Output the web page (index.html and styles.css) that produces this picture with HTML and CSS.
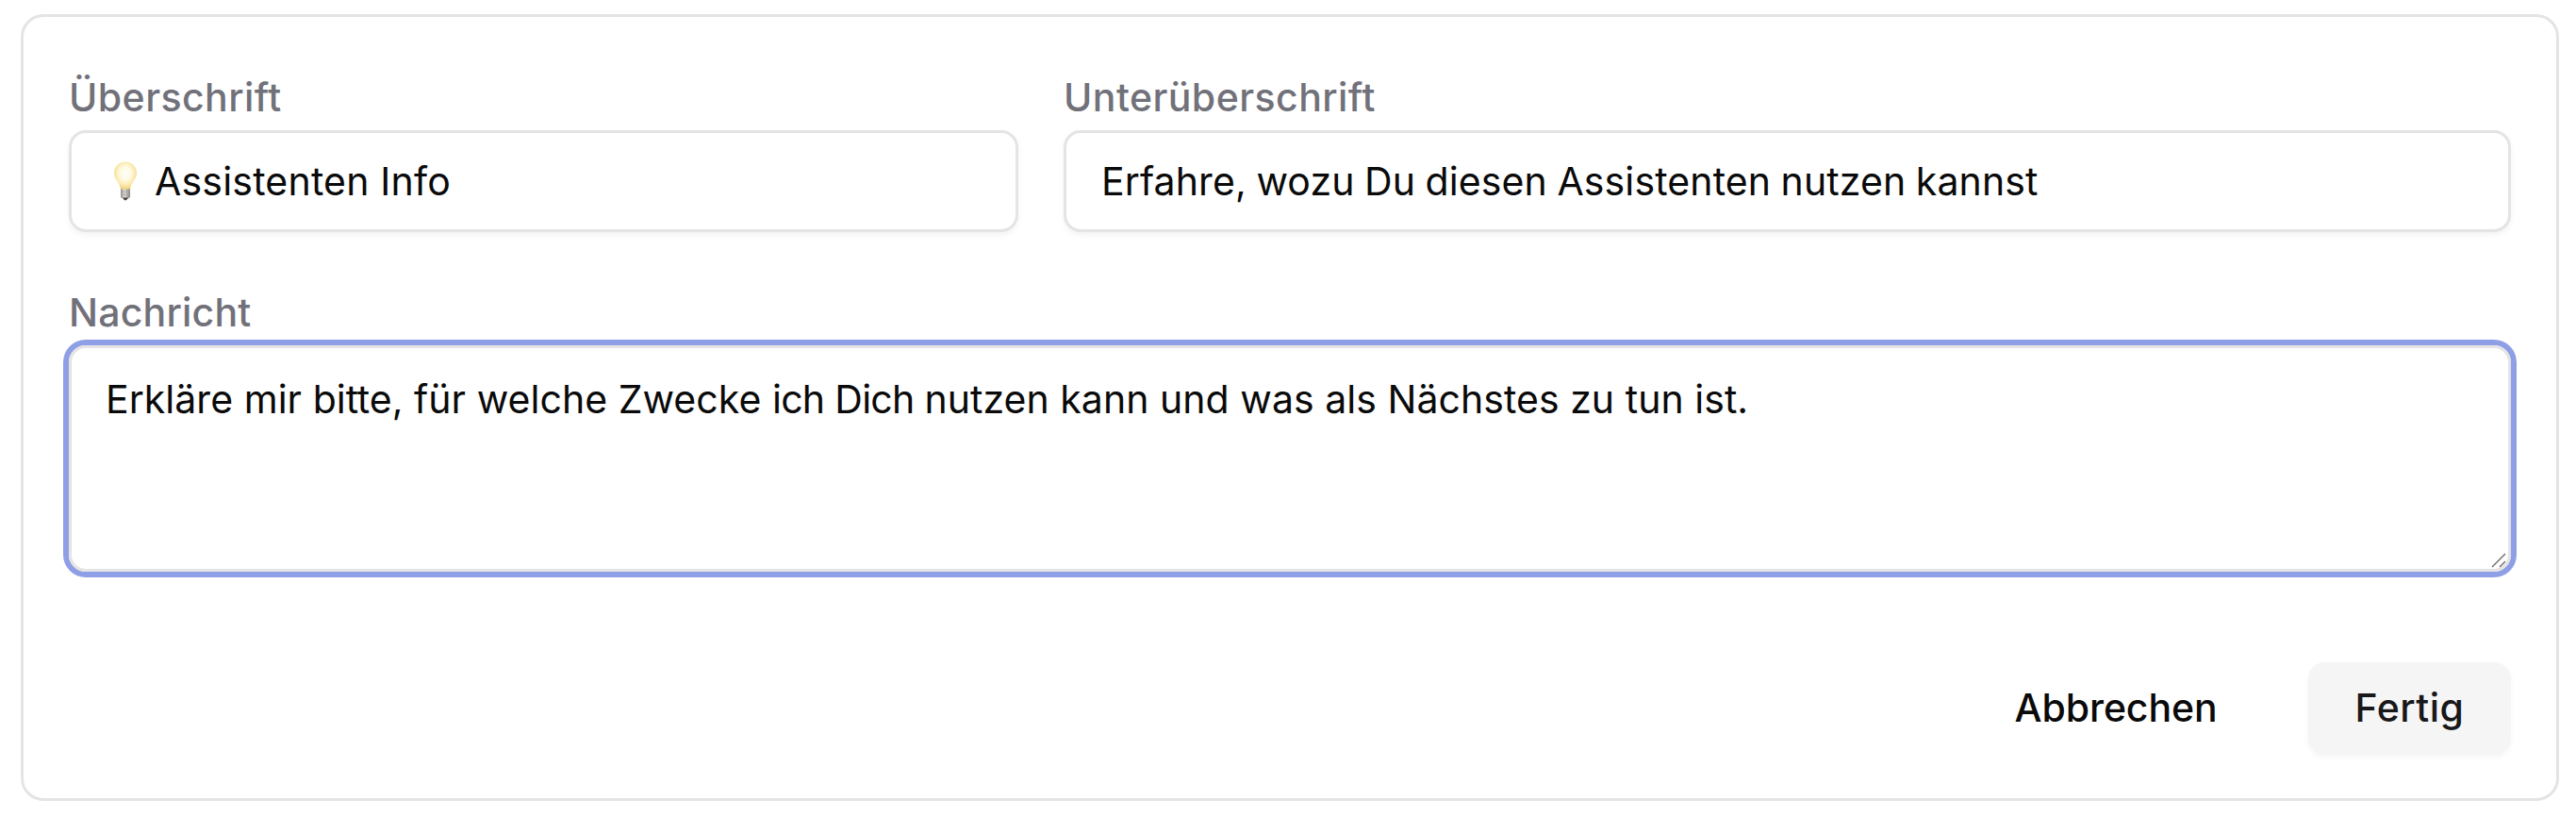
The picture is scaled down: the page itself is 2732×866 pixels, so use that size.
FILE: index.html
```html
<!DOCTYPE html>
<html lang="de">
<head>
<meta charset="utf-8">
<title>Assistenten Info</title>
<link rel="stylesheet" href="styles.css">
</head>
<body>
<form class="card">
  <div class="row">
    <div class="field field-title">
      <span class="label label-title">Überschrift</span>
      <div class="input" role="textbox">
        <svg class="bulb" viewBox="0 0 26 42" aria-hidden="true">
          <defs>
            <radialGradient id="glass" cx="50%" cy="42%" r="60%">
              <stop offset="0" stop-color="#fffefa"/>
              <stop offset="0.4" stop-color="#fffae3"/>
              <stop offset="0.75" stop-color="#f9e7a6"/>
              <stop offset="1" stop-color="#ecca6c"/>
            </radialGradient>
            <linearGradient id="metal">
              <stop offset="0" stop-color="#8d8b85"/>
              <stop offset="0.4" stop-color="#e0ded8"/>
              <stop offset="1" stop-color="#85827b"/>
            </linearGradient>
          </defs>
          <path d="M13 .5C6 .5 1 5.600 1 12.500c0 7.500 6.300 9.500 7 17.500h10c.7-8 7-10 7-17.500C25 5.600 20 .5 13 .5z" fill="url(#glass)"/>
          <path d="M8 29.500h10v8.500l-3 2H11l-3-2z" fill="url(#metal)"/>
          <path d="M8 32.500l10-.8M8 35.500l10-.8" stroke="#a7a49d" stroke-width=".8"/>
          <path d="M10 38.500h6l-2 2.700h-2z" fill="#44423e"/>
        </svg>
        <span class="value value-title">Assistenten Info</span>
      </div>
    </div>
    <div class="field field-subtitle">
      <span class="label label-subtitle">Unterüberschrift</span>
      <div class="input" role="textbox"><span class="value value-subtitle">Erfahre, wozu Du diesen Assistenten nutzen kannst</span></div>
    </div>
  </div>
  <div class="field field-message">
    <span class="label label-message">Nachricht</span>
    <div class="textarea" role="textbox" aria-multiline="true">
      <span class="value value-message">Erkläre mir bi<span class="joined">t</span>te, für welche Zwecke <span class="tight">ich Dich </span>nutzen kann und was als Nächstes zu tun ist.</span>
      <svg class="resizer" viewBox="0 0 16 16" aria-hidden="true"><path d="M1 15L15 1M9 15l6-6" stroke="#6b6b6b" stroke-width="1.400" fill="none"/></svg>
    </div>
  </div>
  <div class="actions">
    <button class="button button-ghost" type="button"><span class="text-cancel">Abbrechen</span></button>
    <button class="button button-primary" type="button"><span class="text-done">Fertig</span></button>
  </div>
</form>
</body>
</html>
```
FILE: styles.css
```css
* { box-sizing: border-box; }
body {
  margin: 0;
  padding: 15px 18px 17px 22px;
  height: 866px;
  background: #fff;
  color: #0a0a0a;
  font: 400 41px/60px Inter, "Liberation Sans", sans-serif;
  white-space: nowrap;
}
.card {
  height: 834px;
  padding: 55px 48px 46px;
  border: 3px solid #e4e4e5;
  border-radius: 24px;
  display: flex;
  flex-direction: column;
}
.row { display: grid; grid-template-columns: 1007px 1fr; gap: 48px; }
.field { display: flex; flex-direction: column; }
.label { height: 65px; line-height: 60px; color: #71717a; font-weight: 500; }
.label-title { letter-spacing: .45px; }
.label-subtitle { letter-spacing: .45px; }
.label-message { letter-spacing: .2px; }
.value-title { letter-spacing: .2px; }
.value-subtitle { letter-spacing: .12px; word-spacing: -1.200px; }
.input {
  height: 108px;
  padding: 0 37px;
  border: 3px solid #e4e4e5;
  border-radius: 18px;
  box-shadow: 0 3px 6px rgba(0, 0, 0, .05);
  display: flex;
  align-items: center;
}
.bulb { width: 26px; height: 42px; margin: 0 18px 0 7px; flex: none; }
.field-message { margin-top: 55px; }
.textarea {
  position: relative;
  height: 240px;
  padding: 24px 36px;
  border: 3px solid #e4e4e5;
  border-radius: 18px;
  box-shadow: 0 0 0 6px #8f9fe5;
}
.value-message { letter-spacing: .04px; }
.joined { letter-spacing: -1.500px; }
.tight { letter-spacing: -.7px; }
.resizer { position: absolute; right: 2px; bottom: 1px; width: 16px; height: 16px; }
.actions { display: flex; justify-content: flex-end; margin-top: 96px; gap: 48px; }
.button {
  height: 98px;
  padding: 0 0 2px;
  border: 0;
  border-radius: 18px;
  background: none;
  color: #0a0a0a;
  font: 500 41px/60px Inter, "Liberation Sans", sans-serif;
}
.button-ghost { width: 312px; }
.button-primary { width: 215px; background: #f5f5f5; color: #18181b; box-shadow: 0 3px 6px rgba(0, 0, 0, .04); }
.text-cancel { letter-spacing: -.1px; }
.text-done { letter-spacing: .5px; }
```
